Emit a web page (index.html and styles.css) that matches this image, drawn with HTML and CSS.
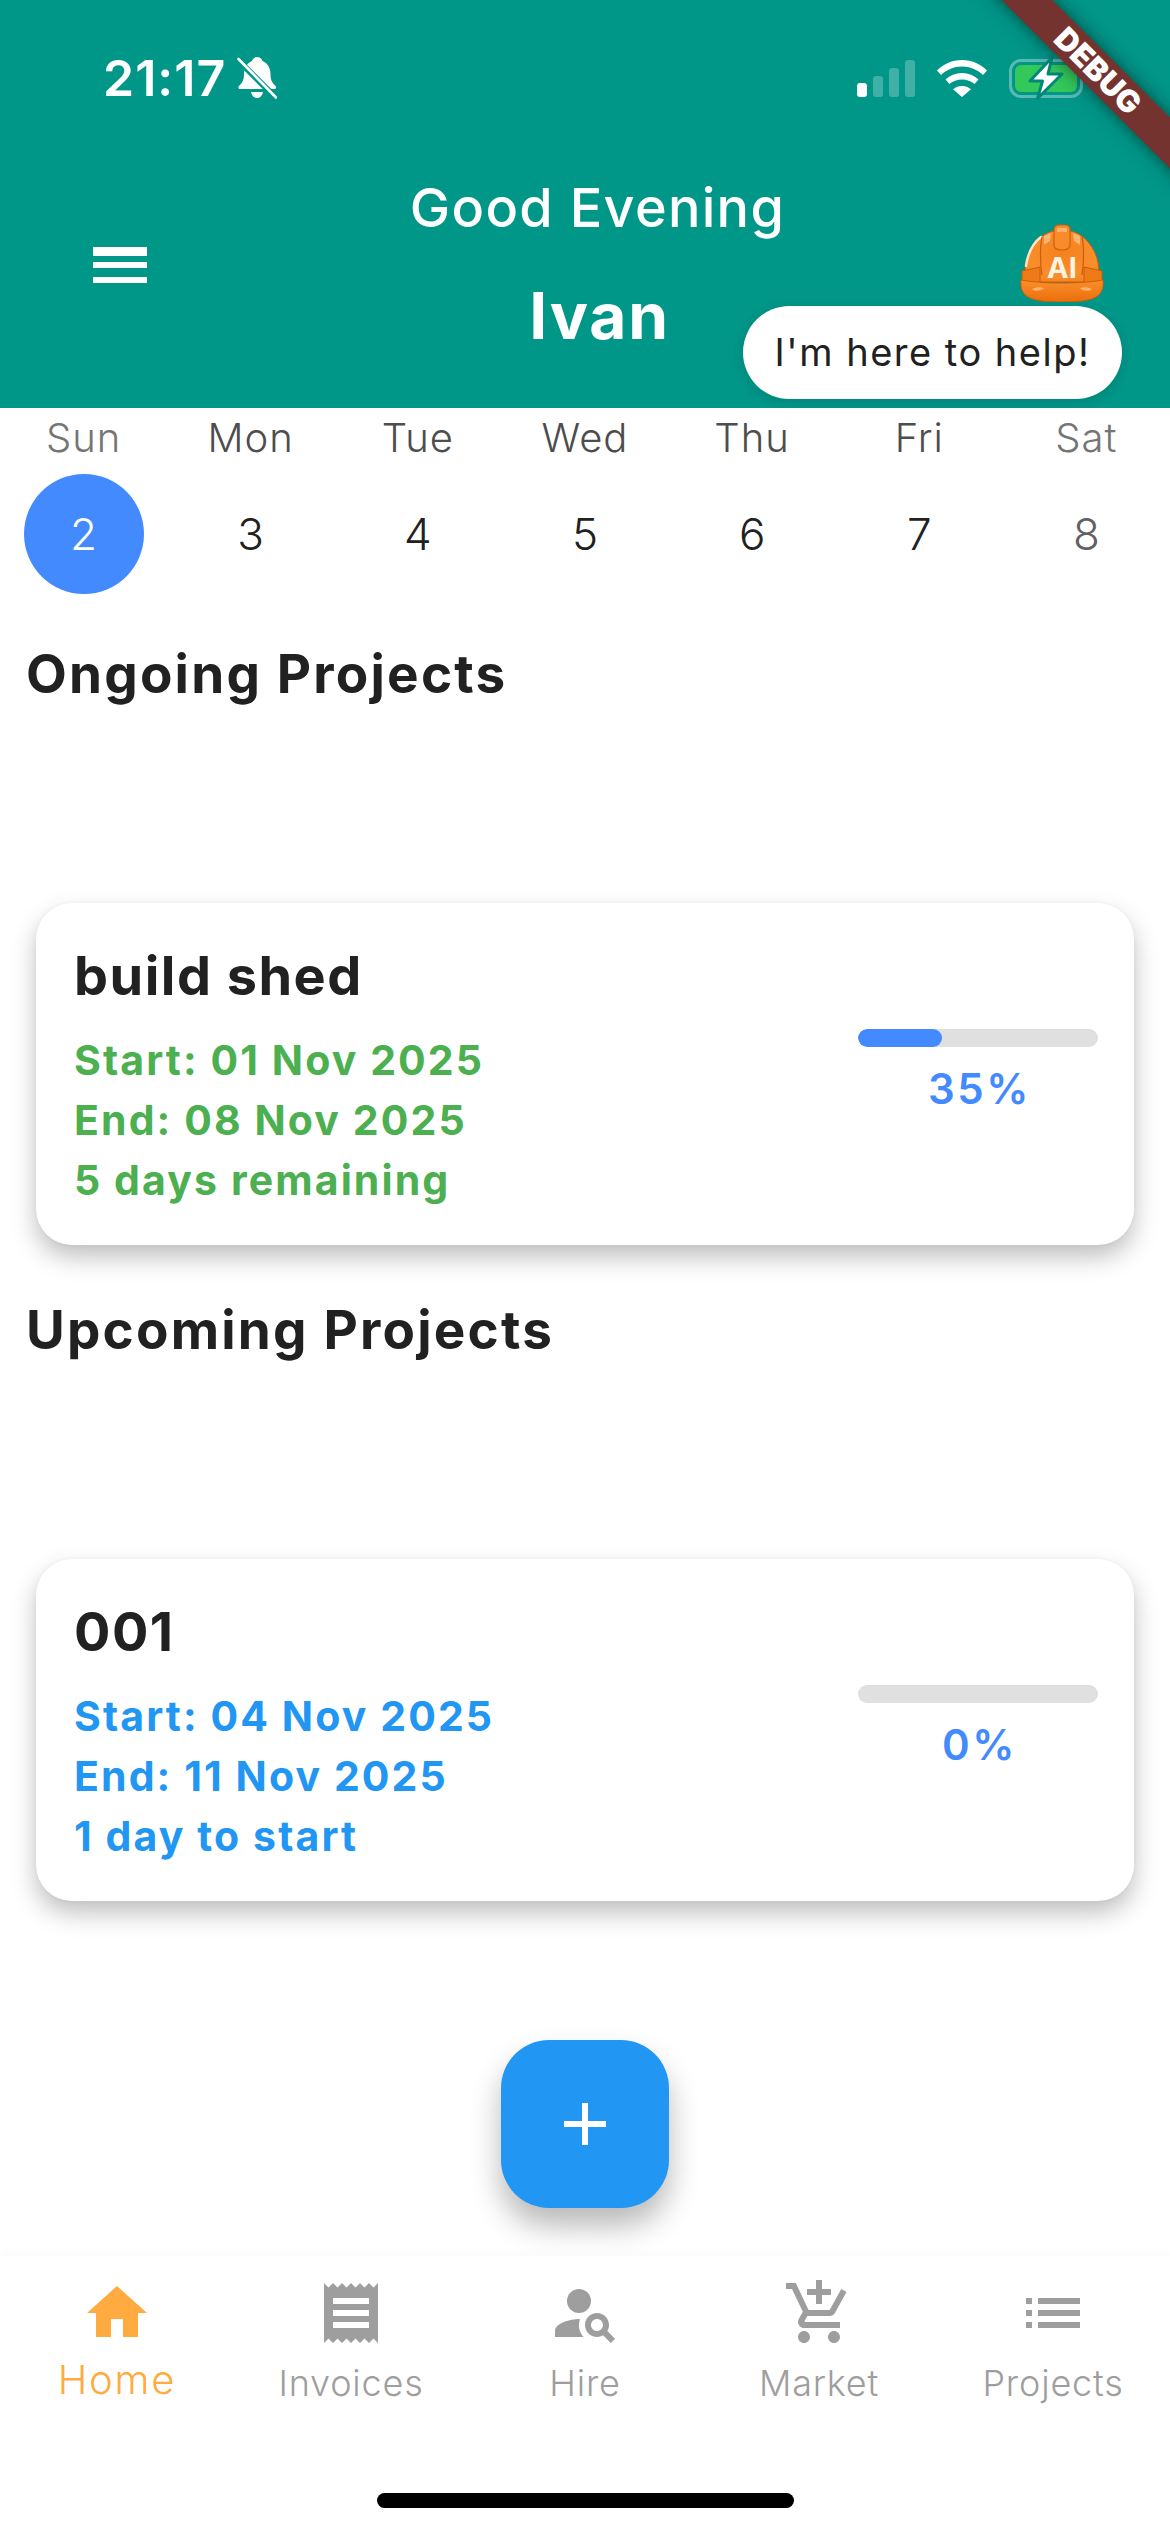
FILE: index.html
```html
<!DOCTYPE html>
<html lang="en">
<head>
<meta charset="utf-8">
<title>Home</title>
<link rel="stylesheet" href="styles.css">
</head>
<body>
<div class="screen">
  <header class="header">
    <div class="status">
      <div class="status-left">
        <span class="time">21:17</span>
        <svg class="bell" viewBox="0 0 40 44">
          <path fill="#fff" d="M20 1c3 0 5 2 5.500 4 5 2 8 7 8 13 0 5 1 8 5 12 1 1 1 3-1 3H3c-2 0-2-2-1-3 4-4 5-7 5-12 0-6 3-11 8-13 .5-2 2.500-4 5.500-4zM14 36h12c-1 4-3 6-6 6s-5-2-6-6z"/>
          <path fill="none" stroke="#009688" stroke-width="6" d="M-2 1 41 44"/>
          <path fill="none" stroke="#fff" stroke-width="2.600" stroke-linecap="round" d="M1.500 3 39 41.500"/>
        </svg>
      </div>
      <div class="status-right">
        <div class="signal"><i class="b1"></i><i class="b2"></i><i class="b3"></i><i class="b4"></i></div>
        <svg class="wifi" viewBox="0 0 50 37"><path fill="#fff" d="M25 0c10 0 18 3.800 25 10.500l-4 4.500C40 9.500 33 6.500 25 6.500S10 9.500 4 15L0 10.500C7 3.800 15 0 25 0zM25 13c6.500 0 12 2.300 16.500 6.500l-4 4.500C34 21 30 19.500 25 19.500S16 21 12.500 24l-4-4.500C13 15.300 18.500 13 25 13zM25 26c3.500 0 6.500 1.200 9 3.300L25 37l-9-7.700C18.500 27.200 21.500 26 25 26z"/></svg>
        <div class="battery">
          <div class="battery-fill"></div>
          <svg class="bolt" viewBox="0 0 38 44"><path fill="#fff" stroke="#00897b" stroke-width="3" stroke-linejoin="round" d="M25 1.500 3 25h12.500l-5 17.500L35 18H21z"/></svg>
        </div>
      </div>
    </div>
    <div class="appbar">
      <svg class="menu" viewBox="0 0 24 24"><path fill="#fff" d="M3 18h18v-2H3v2zm0-5h18v-2H3v2zm0-6v2h18V6H3z"/></svg>
      <div class="greeting">
        <div class="hello">Good Evening</div>
        <div class="name">Ivan</div>
      </div>
      <svg class="helmet" viewBox="0 0 84 78">
        <defs>
          <radialGradient id="dome" cx="50%" cy="40%" r="70%"><stop offset="0" stop-color="#f5801c"/><stop offset=".7" stop-color="#f98e2e"/><stop offset="1" stop-color="#f47e18"/></radialGradient>
          <linearGradient id="brim" x1="0" y1="0" x2="0" y2="1"><stop offset="0" stop-color="#fb8f2a"/><stop offset="1" stop-color="#e96f0c"/></linearGradient>
        </defs>
        <path fill="url(#dome)" stroke="#c75e0a" stroke-width="1" d="M5 48C5 26 20 9 34 7h16c14 2 29 19 29 41v10H5z"/>
        <path fill="none" stroke="#fde3c4" stroke-width="2.500" stroke-linecap="round" d="M6 42C8 28 13 19 21 13"/>
        <path fill="#fcb673" d="M24 12l7-3-1 8c-2 1-4 2-6 4zM60 12l-7-3 1 8c2 1 4 2 6 4z"/>
        <path fill="none" stroke="#c75e0a" stroke-width="1.200" d="M22 13c-2 9-2 26 0 38M62 13c2 9 2 26 0 38"/>
        <path fill="#f98b2a" stroke="#cc620b" stroke-width="1.200" d="M34 6c0-3 2-5 5-5h6c3 0 5 2 5 5v15c0 3-3 5-8 5s-8-2-8-5z"/>
        <path fill="#fbb26f" d="M37 4h10v4H37z"/>
        <path fill="#ef7a18" stroke="#c75e0a" stroke-width="1" d="M2 47l18-4v17H2zM82 47l-18-4v17h18z"/>
        <path fill="url(#brim)" stroke="#c75e0a" stroke-width="1" d="M1 56c0 0 15 3 41 3s41-3 41-3c1 9-2 15-9 18-6 3-18 4-32 4s-26-1-32-4C3 71 0 65 1 56z"/>
        <path fill="#fbb26f" d="M12 65c4-2 8-2 12-1-2 3-10 4-12 1zM60 64c4-1 8-1 12 1-2 3-10 2-12-1z"/>
        <text class="helmet-ai" x="42" y="54" text-anchor="middle">AI</text>
      </svg>
    </div>
    <div class="bubble">I'm here to help!</div>
    <div class="debug"><span>DEBUG</span></div>
  </header>

  <section class="calendar">
    <div class="day"><span class="dow weekend">Sun</span><span class="date selected">2</span></div>
    <div class="day"><span class="dow">Mon</span><span class="date">3</span></div>
    <div class="day"><span class="dow">Tue</span><span class="date">4</span></div>
    <div class="day"><span class="dow">Wed</span><span class="date">5</span></div>
    <div class="day"><span class="dow">Thu</span><span class="date">6</span></div>
    <div class="day"><span class="dow">Fri</span><span class="date">7</span></div>
    <div class="day"><span class="dow weekend">Sat</span><span class="date muted">8</span></div>
  </section>

  <main class="content">
    <h2 class="section-title">Ongoing Projects</h2>
    <article class="card card-green">
      <div class="card-info">
        <h3 class="card-title">build shed</h3>
        <p class="card-line">Start: 01 Nov 2025</p>
        <p class="card-line">End: 08 Nov 2025</p>
        <p class="card-line">5 days remaining</p>
      </div>
      <div class="progress">
        <div class="track"><div class="fill" style="width:35%"></div></div>
        <div class="percent">35%</div>
      </div>
    </article>

    <h2 class="section-title second">Upcoming Projects</h2>
    <article class="card card-blue">
      <div class="card-info">
        <h3 class="card-title">001</h3>
        <p class="card-line">Start: 04 Nov 2025</p>
        <p class="card-line">End: 11 Nov 2025</p>
        <p class="card-line">1 day to start</p>
      </div>
      <div class="progress">
        <div class="track"><div class="fill" style="width:0%"></div></div>
        <div class="percent">0%</div>
      </div>
    </article>

    <div class="fab-row">
      <button class="fab" aria-label="Add"><svg viewBox="0 0 42 42"><path fill="#fff" d="M18 0h6v18h18v6H24v18h-6V24H0v-6h18z"/></svg></button>
    </div>
  </main>

  <nav class="nav">
    <div class="nav-item active">
      <svg class="nav-icon" viewBox="0 0 24 24"><path d="M10 20v-6h4v6h5v-8h3L12 3 2 12h3v8z"/></svg>
      <span class="nav-label">Home</span>
    </div>
    <div class="nav-item">
      <svg class="nav-icon" viewBox="0 0 24 24"><path d="M18 17H6v-2h12v2zm0-4H6v-2h12v2zm0-4H6V7h12v2zM3 22l1.500-1.500L6 22l1.500-1.500L9 22l1.500-1.500L12 22l1.500-1.500L15 22l1.500-1.500L18 22l1.500-1.500L21 22V2l-1.500 1.500L18 2l-1.500 1.500L15 2l-1.500 1.500L12 2l-1.500 1.500L9 2 7.500 3.500 6 2 4.500 3.500 3 2v20z"/></svg>
      <span class="nav-label">Invoices</span>
    </div>
    <div class="nav-item">
      <svg class="nav-icon" viewBox="0 0 24 24"><circle cx="10" cy="8" r="4"/><path d="M10.350 14.010C7.620 13.910 2 15.270 2 18v2h9.540c-2.470-2.760-1.230-5.890-1.190-5.990zM19.430 18.020c.36-.59.57-1.280.57-2.020 0-2.210-1.790-4-4-4s-4 1.790-4 4 1.790 4 4 4c.74 0 1.430-.22 2.020-.57L20.590 22 22 20.590l-2.570-2.570zM16 18c-1.100 0-2-.9-2-2s.9-2 2-2 2 .9 2 2-.9 2-2 2z"/></svg>
      <span class="nav-label">Hire</span>
    </div>
    <div class="nav-item">
      <svg class="nav-icon" viewBox="0 0 24 24"><path d="M11 9h2V6h3V4h-3V1h-2v3H8v2h3v3zm-4 9c-1.100 0-1.990.9-1.990 2S5.900 22 7 22s2-.9 2-2-.9-2-2-2zm10 0c-1.100 0-1.990.9-1.990 2s.89 2 1.990 2 2-.9 2-2-.9-2-2-2zm-9.830-3.250l.03-.12.9-1.630h7.450c.75 0 1.410-.41 1.750-1.030l3.860-7.010L19.420 4h-.01l-1.100 2-2.760 5H8.530l-.13-.27L6.160 6l-.95-2-.94-2H1v2h2l3.600 7.590-1.350 2.450c-.16.28-.25.61-.25.96 0 1.100.9 2 2 2h12v-2H7.420c-.13 0-.25-.11-.25-.25z"/></svg>
      <span class="nav-label">Market</span>
    </div>
    <div class="nav-item">
      <svg class="nav-icon" viewBox="0 0 24 24"><path d="M3 13h2v-2H3v2zm0 4h2v-2H3v2zm0-8h2V7H3v2zm4 4h14v-2H7v2zm0 4h14v-2H7v2zM7 7v2h14V7H7z"/></svg>
      <span class="nav-label">Projects</span>
    </div>
  </nav>
  <div class="home-bar"><div class="home-indicator"></div></div>
</div>
</body>
</html>
```
FILE: styles.css
```css
* { box-sizing: border-box; }
html, body { margin: 0; padding: 0; background: #fff; }
body { font-family: Inter, "Noto Sans", "Liberation Sans", sans-serif; color: #212121; }
.screen { width: 1170px; height: 2532px; display: flex; flex-direction: column; overflow: hidden; position: relative; background: #fff; }

/* Header */
.header { height: 408px; background: #009688; position: relative; overflow: hidden; flex: none; padding-top: 59px; }
.status { display: flex; justify-content: space-between; align-items: center; height: 38px; padding: 0 87px 0 103px; }
.status-left { display: flex; align-items: center; gap: 11px; }
.time { color: #fff; font-size: 50px; font-weight: 600; line-height: 38px; letter-spacing: 1px; }
.bell { width: 40px; height: 44px; }
.status-right { display: flex; align-items: center; gap: 22px; }
.signal { display: flex; align-items: flex-end; gap: 6px; height: 37px; }
.signal i { display: block; width: 10px; border-radius: 3px; background: rgba(255,255,255,.25); }
.signal .b1 { height: 14px; background: #fff; }
.signal .b2 { height: 21px; }
.signal .b3 { height: 29px; }
.signal .b4 { height: 37px; }
.wifi { width: 50px; height: 37px; }
.battery { width: 74px; height: 39px; border: 3px solid rgba(255,255,255,.35); border-radius: 12px; padding: 3px; position: relative; }
.battery-fill { width: 100%; height: 100%; background: #34c759; border-radius: 6px; }
.bolt { position: absolute; left: 15px; top: -6px; width: 38px; height: 44px; }

.appbar { display: flex; align-items: flex-start; margin-top: 69px; padding: 0 66px 0 84px; }
.menu { width: 72px; height: 72px; flex: none; margin-top: 63px; }
.greeting { flex: 1; padding-left: 19px; margin-top: 12px; text-align: center; color: #fff; }
.hello { font-size: 54px; font-weight: 500; line-height: 60px; letter-spacing: 1.300px; }
.name { font-size: 64px; font-weight: 700; line-height: 76px; margin-top: 40px; padding-left: 4px; letter-spacing: 1.800px; }
.helmet { width: 84px; height: 78px; flex: none; margin-top: 58px; }
.helmet-ai { font-family: Inter, sans-serif; font-weight: 700; font-size: 29px; fill: #fff3e2; }

.bubble { position: absolute; left: 743px; top: 306px; width: 379px; height: 93px; border-radius: 47px; background: #fff; color: #212121; font-size: 38px; line-height: 93px; text-align: center; letter-spacing: 1.500px; box-shadow: 0 3px 12px rgba(0,0,0,.12); }
.debug { position: absolute; width: 320px; height: 36px; left: 938px; top: 53px; transform: rotate(45deg); background: #75332f; box-shadow: 0 0 18px rgba(0,0,0,.5); display: flex; align-items: center; justify-content: center; }
.debug span { color: #fff; font-size: 31px; font-weight: 900; line-height: 36px; }

/* Calendar */
.calendar { display: grid; grid-template-columns: repeat(7, 1fr); flex: none; }
.day { display: flex; flex-direction: column; align-items: center; }
.dow { font-size: 40px; font-weight: 300; line-height: 46px; color: #4d4d4d; letter-spacing: 1px; margin-top: 7px; }
.dow.weekend { color: #757575; }
.date { width: 120px; height: 120px; border-radius: 50%; margin-top: 13px; display: flex; align-items: center; justify-content: center; font-size: 44px; font-weight: 300; color: #212121; }
.date.selected { background: #448aff; color: #fff; }
.date.muted { color: #616161; }

/* Content */
.content { flex: 1; padding: 0 26px; min-height: 0; }
.section-title { margin: 49px 0 0; font-size: 53px; font-weight: 700; line-height: 62px; letter-spacing: 2.200px; color: #212121; }
.section-title.second { margin-top: 54px; }
.card { margin: 198px 10px 0; height: 342px; border-radius: 36px; background: #fff; box-shadow: 0 12px 24px rgba(0,0,0,.25), 0 0 4px rgba(0,0,0,.04); padding: 42px 36px 0 38px; display: flex; justify-content: space-between; }
.card-title { margin: 0; font-size: 54px; font-weight: 700; line-height: 62px; letter-spacing: 1.500px; color: #212121; }
.card-line { margin: 0; font-size: 41px; font-weight: 700; line-height: 60px; letter-spacing: 2.100px; }
.card-title + .card-line { margin-top: 23px; }
.card-green .card-line { color: #4caf50; }
.card-blue .card-line { color: #2196f3; }
.progress { width: 240px; margin-top: 84px; display: flex; flex-direction: column; align-items: center; }
.track { width: 100%; height: 18px; border-radius: 9px; background: #e0e0e0; overflow: hidden; }
.fill { height: 100%; background: #448aff; border-radius: 9px; }
.percent { color: #448aff; font-size: 42px; font-weight: 600; line-height: 48px; margin-top: 18px; padding-left: 3px; letter-spacing: 2.500px; }
.fab-row { display: flex; justify-content: center; margin-top: 139px; }
.fab { width: 168px; height: 168px; border: 0; border-radius: 48px; background: #2196f3; box-shadow: 0 18px 30px rgba(0,0,0,.28); display: flex; align-items: center; justify-content: center; padding: 0; }
.fab svg { width: 42px; height: 42px; }

/* Bottom nav */
.nav { flex: none; height: 276px; display: grid; grid-template-columns: repeat(5, 1fr); padding-top: 21px; background: #fff; box-shadow: 0 -4px 10px rgba(0,0,0,.02); position: relative; }
.nav-item { display: flex; flex-direction: column; align-items: center; color: #9e9e9e; }
.nav-icon { width: 72px; height: 72px; fill: #9e9e9e; }
.nav-label { font-size: 36px; font-weight: 300; line-height: 42px; margin-top: 13px; letter-spacing: .8px; }
.nav-item.active { color: #ffab40; }
.nav-item.active .nav-icon { fill: #ffab40; }
.nav-item.active .nav-label { font-size: 40px; margin-top: 8px; line-height: 46px; letter-spacing: 1.800px; }
.home-bar { height: 86px; position: absolute; left: 0; right: 0; bottom: 0; display: flex; justify-content: center; padding-top: 47px; pointer-events: none; }
.home-indicator { width: 417px; height: 15px; border-radius: 8px; background: #000; }
```
